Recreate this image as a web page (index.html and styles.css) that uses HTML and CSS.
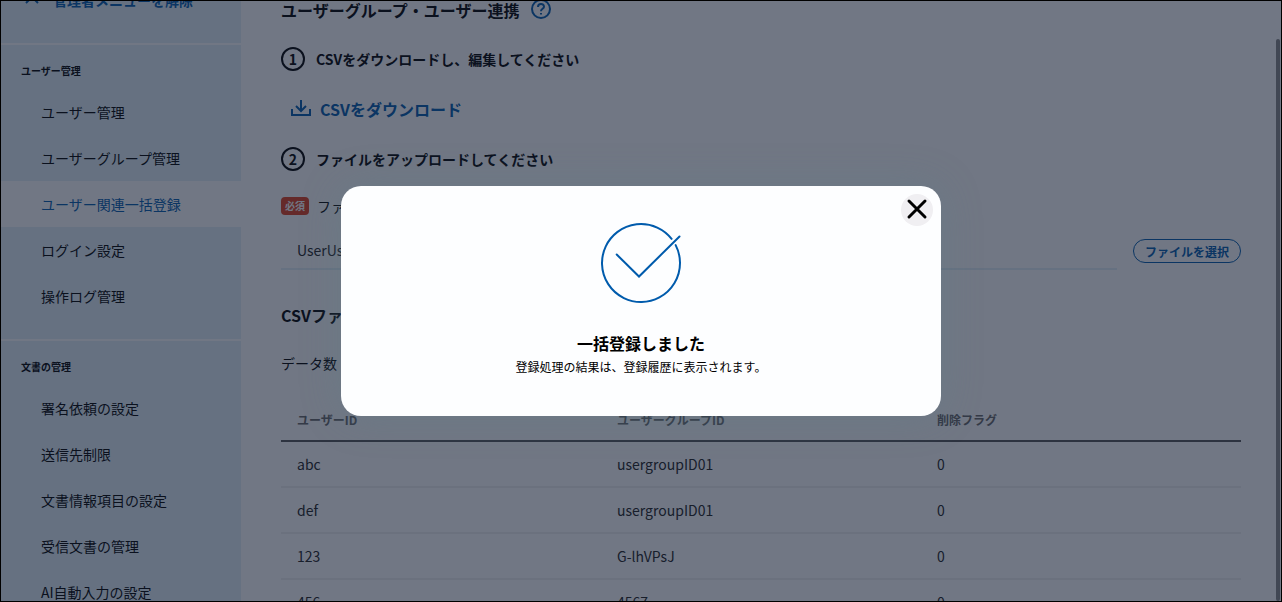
FILE: index.html
```
<!DOCTYPE html>
<html lang="ja">
<head>
<meta charset="UTF-8">
<meta name="viewport" content="width=device-width, initial-scale=1.0">
<title>ユーザー関連一括登録</title>
<link rel="stylesheet" href="styles.css">
</head>
<body>

<div class="app">
  <nav class="sidebar">
    <div class="side-top">
      <a href="#" class="exit-link">
        <svg width="14" height="14" viewBox="0 0 14 14"><path d="M1 10L7 4L13 10"/></svg>
        管理者メニューを解除
      </a>
    </div>

    <div class="side-section">
      <h2>ユーザー管理</h2>
      <ul>
        <li><a href="#">ユーザー管理</a></li>
        <li><a href="#">ユーザーグループ管理</a></li>
        <li><a href="#" class="active">ユーザー関連一括登録</a></li>
        <li><a href="#">ログイン設定</a></li>
        <li><a href="#">操作ログ管理</a></li>
      </ul>
    </div>

    <div class="side-section">
      <h2>文書の管理</h2>
      <ul>
        <li><a href="#">署名依頼の設定</a></li>
        <li><a href="#">送信先制限</a></li>
        <li><a href="#">文書情報項目の設定</a></li>
        <li><a href="#">受信文書の管理</a></li>
        <li><a href="#">AI自動入力の設定</a></li>
      </ul>
    </div>
  </nav>

  <main class="content">
    <div class="page-title">
      <h1>ユーザーグループ・ユーザー連携</h1>
      <svg class="help" width="20" height="20" viewBox="0 0 20 20">
        <circle cx="10" cy="9" r="9"/>
        <path d="M7 7C7 3 13 3 13 6.700C13 8.800 10 8.800 10 11.200M10 13V14.600"/>
      </svg>
    </div>

    <div class="step"><span class="step-num">1</span>CSVをダウンロードし、編集してください</div>

    <a href="#" class="download">
      <svg width="20" height="20" viewBox="0 0 20 20"><path d="M1 10V16H19V10M10 1V11M5 7L10 12L15 7"/></svg>
      CSVをダウンロード
    </a>

    <div class="step"><span class="step-num">2</span>ファイルをアップロードしてください</div>

    <div class="field-label">
      <span class="required">必須</span>
      <label for="file-name">ファイル</label>
    </div>
    <div class="file-row">
      <input type="text" id="file-name" value="UserUserGroup.csv" readonly>
      <button type="button" class="select-btn">ファイルを選択</button>
    </div>

    <h2 class="preview-title">CSVファイル</h2>
    <p class="count">データ数</p>

    <table>
      <thead>
        <tr><th>ユーザーID</th><th>ユーザーグループID</th><th>削除フラグ</th></tr>
      </thead>
      <tbody>
        <tr><td>abc</td><td>usergroupID01</td><td>0</td></tr>
        <tr><td>def</td><td>usergroupID01</td><td>0</td></tr>
        <tr><td>123</td><td>G-lhVPsJ</td><td>0</td></tr>
        <tr><td>456</td><td>4567</td><td>0</td></tr>
      </tbody>
    </table>
  </main>

  <div class="scroll-thumb"></div>

  <div class="overlay">
    <div class="modal" role="dialog" aria-labelledby="modal-title">
      <button type="button" class="close-btn" aria-label="閉じる">
        <svg width="20" height="20" viewBox="0 0 20 20"><path d="M2 1L18 17M18 1L2 17"/></svg>
      </button>
      <svg class="done" width="80" height="80" viewBox="0 0 80 80">
        <path d="M70.610 15.830A39 39 0 1 0 74.660 22.110M15.700 31.500L38 53.500L78.500 13.500"/>
      </svg>
      <h2 id="modal-title">一括登録しました</h2>
      <p>登録処理の結果は、登録履歴に表示されます。</p>
    </div>
  </div>
</div>

</body>
</html>
```
FILE: styles.css
```
* {
  box-sizing: border-box;
}
body {
  margin: 0;
  font-family: "Noto Sans CJK JP", sans-serif;
  font-size: 14px;
  line-height: 20px;
  color: #000;
}
h1, h2, p, ul {
  margin: 0;
  padding: 0;
}
ul {
  list-style: none;
}
a {
  color: inherit;
  text-decoration: none;
}
svg {
  fill: none;
  stroke: #005bac;
  stroke-width: 2;
  flex-shrink: 0;
  overflow: visible;
}
button, input {
  font-family: inherit;
}
.app {
  position: relative;
  display: flex;
  height: 100vh;
  border: 1px solid #000;
  background-color: #fff;
  overflow: hidden;
}

/* Sidebar */
.sidebar {
  width: 240px;
  flex-shrink: 0;
  background-color: #e4f1f8;
}
.side-top {
  display: flow-root;
  height: 42px;
  padding-left: 24px;
}
.exit-link {
  display: flex;
  align-items: center;
  gap: 14px;
  margin-top: -11px;
  color: #005bac;
  font-weight: bold;
}
.side-section {
  padding-bottom: 20px;
  border-top: 2px solid #fff;
}
.side-section h2 {
  padding: 16px 20px 8px;
  font-size: 10px;
}
.side-section li a {
  display: block;
  padding: 13px 40px;
}
.side-section li a.active {
  background-color: #fff;
  color: #005bac;
}

/* Content */
.content {
  display: flex;
  flex-direction: column;
  flex: 1;
  padding: 0 40px;
}
.content > * {
  flex-shrink: 0;
}
.page-title {
  display: flex;
  align-items: center;
  gap: 12px;
  height: 18px;
}
.page-title h1 {
  font-size: 16px;
}
.step {
  display: flex;
  align-items: center;
  gap: 11px;
  margin-top: 26px;
  font-weight: bold;
}
.page-title + .step {
  margin-top: 28px;
}
.step-num {
  display: flex;
  align-items: center;
  justify-content: center;
  width: 24px;
  height: 24px;
  border: 2px solid #000;
  border-radius: 50%;
}
.download {
  display: flex;
  align-items: center;
  align-self: flex-start;
  gap: 9px;
  margin-top: 26px;
  margin-left: 10px;
  color: #005bac;
  font-size: 16px;
  font-weight: bold;
  line-height: 24px;
}
.field-label {
  display: flex;
  align-items: center;
  gap: 8px;
  margin-top: 25px;
}
.required {
  padding: 0 4px;
  border-radius: 4px;
  background-color: #e0401f;
  color: #fff;
  font-size: 10px;
  font-weight: bold;
  line-height: 18px;
}
.file-row {
  display: flex;
  align-items: center;
  gap: 16px;
  margin-top: 16px;
}
.file-row input {
  flex: 1;
  height: 38px;
  padding: 0 16px;
  border: none;
  border-bottom: 2px solid #e4f1f8;
  background: none;
  color: #222;
  font-size: 14px;
}
.select-btn {
  height: 24px;
  padding: 0 11px;
  border: 1px solid #005bac;
  border-radius: 12px;
  background-color: #fff;
  color: #005bac;
  font-size: 12px;
  font-weight: bold;
}
.preview-title {
  margin-top: 35px;
  font-size: 16px;
}
.count {
  margin: 28px 0 27px;
}
table {
  width: 100%;
  border-collapse: separate;
  border-spacing: 0;
  table-layout: fixed;
}
th, td {
  padding: 12px 16px;
  border-bottom: 2px solid #f0f0f0;
  text-align: left;
}
th {
  padding: 10px 16px;
  border-color: #555;
  color: #666;
  font-size: 12px;
}
td {
  color: #222;
}
.scroll-thumb {
  position: absolute;
  top: 38px;
  right: 1px;
  bottom: 0;
  width: 4px;
  border-radius: 2px;
  background-color: #888;
}

/* Modal */
.overlay {
  position: absolute;
  inset: 0;
  display: flex;
  align-items: center;
  justify-content: center;
  background-color: rgba(18, 28, 50, 0.6);
}
.modal {
  position: relative;
  display: flex;
  flex-direction: column;
  align-items: center;
  width: 600px;
  max-width: 90%;
  padding: 37px 24px 38px;
  border-radius: 20px;
  background-color: #fdfeff;
  box-shadow: 0 0 40px rgba(90, 130, 135, 0.3);
}
.modal h2 {
  margin-top: 28px;
  font-size: 16px;
  line-height: 24px;
}
.modal p {
  font-size: 12px;
  line-height: 23px;
}
.close-btn {
  position: absolute;
  top: 8px;
  right: 8px;
  display: flex;
  align-items: center;
  justify-content: center;
  width: 32px;
  height: 32px;
  padding: 0;
  border: none;
  border-radius: 50%;
  background-color: #f0eff2;
  cursor: pointer;
}
.close-btn svg {
  stroke: #000;
  stroke-width: 3;
  stroke-linecap: round;
}
.done {
  stroke-linecap: round;
}
```
